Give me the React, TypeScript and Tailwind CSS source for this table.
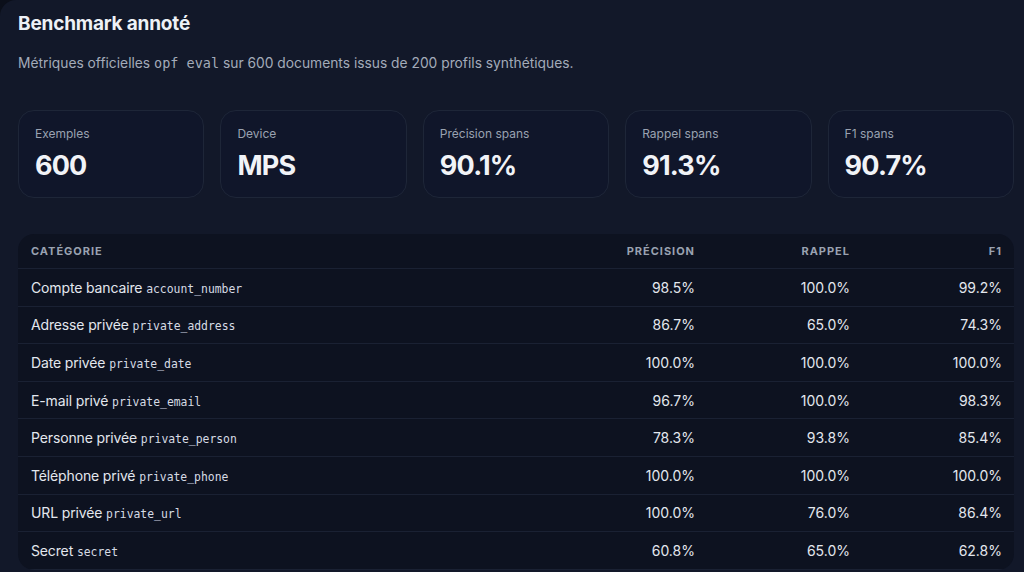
const stats = [
  { label: 'Exemples', value: '600' },
  { label: 'Device', value: 'MPS' },
  { label: 'Précision spans', value: '90.1%' },
  { label: 'Rappel spans', value: '91.3%' },
  { label: 'F1 spans', value: '90.7%' },
];

const rows = [
  { name: 'Compte bancaire', code: 'account_number', p: '98.5%', r: '100.0%', f: '99.2%' },
  { name: 'Adresse privée', code: 'private_address', p: '86.7%', r: '65.0%', f: '74.3%' },
  { name: 'Date privée', code: 'private_date', p: '100.0%', r: '100.0%', f: '100.0%' },
  { name: 'E-mail privé', code: 'private_email', p: '96.7%', r: '100.0%', f: '98.3%' },
  { name: 'Personne privée', code: 'private_person', p: '78.3%', r: '93.8%', f: '85.4%' },
  { name: 'Téléphone privé', code: 'private_phone', p: '100.0%', r: '100.0%', f: '100.0%' },
  { name: 'URL privée', code: 'private_url', p: '100.0%', r: '76.0%', f: '86.4%' },
  { name: 'Secret', code: 'secret', p: '60.8%', r: '65.0%', f: '62.8%' },
];

const mono = "font-['DejaVu_Sans_Mono','Liberation_Mono',monospace]";

export default function App() {
  return (
    <div className="h-[572px] w-[1024px] overflow-hidden bg-[#0b0f1a] font-['Inter','Noto_Sans',sans-serif]">
      <div className="min-h-[600px] rounded-tl-2xl bg-[#121829] pl-[18px] pr-[10px] pt-[11px]">
        {/* Header */}
        <h1 className="text-[19px] font-bold leading-[26px] tracking-[-0.01em] text-[#eef1f6]">Benchmark annoté</h1>
        <p className="mt-[16px] text-[13.8px] leading-5 text-[#a3abb9]">
          Métriques officielles <span className={`${mono} text-[13.5px]`}>opf eval</span> sur 600 documents issus de 200 profils synthétiques.
        </p>

        {/* Stat cards */}
        <div className="mt-[37px] grid grid-cols-5 gap-4">
          {stats.map((s) => (
            <div key={s.label} className="h-[88px] rounded-2xl border border-[#1e2638] bg-[#10162a] px-4 pt-[15px]">
              <p className="text-[12px] leading-4 text-[#9aa2b1]">{s.label}</p>
              <p className="mt-[8px] text-[27px] font-bold leading-8 tracking-[-0.03em] text-[#f1f3f7]">{s.value}</p>
            </div>
          ))}
        </div>

        {/* Table */}
        <div className="mt-[36px] overflow-hidden rounded-2xl bg-[#0d1220]">
          <div className="grid h-[35px] grid-cols-[1fr_155px_155px_152px] items-center border-b border-[#1a2133] px-3 text-[11px] font-bold uppercase tracking-[0.09em] text-[#9aa2b1]">
            <span className="pl-[1px]">Catégorie</span>
            <span className="text-right">Précision</span>
            <span className="text-right">Rappel</span>
            <span className="text-right">F1</span>
          </div>
          {rows.map((r) => (
            <div
              key={r.code}
              className="grid h-[37.6px] grid-cols-[1fr_155px_155px_152px] items-center border-b border-[#1a2133] px-3 text-[14px] text-[#e3e7ee]"
            >
              <span className="pl-[1px] tracking-[-0.01em]">
                {r.name} <span className={`${mono} text-[11.4px] tracking-normal text-[#d6dbe4]`}>{r.code}</span>
              </span>
              <span className="text-right">{r.p}</span>
              <span className="text-right">{r.r}</span>
              <span className="text-right">{r.f}</span>
            </div>
          ))}
        </div>
      </div>
    </div>
  );
}
